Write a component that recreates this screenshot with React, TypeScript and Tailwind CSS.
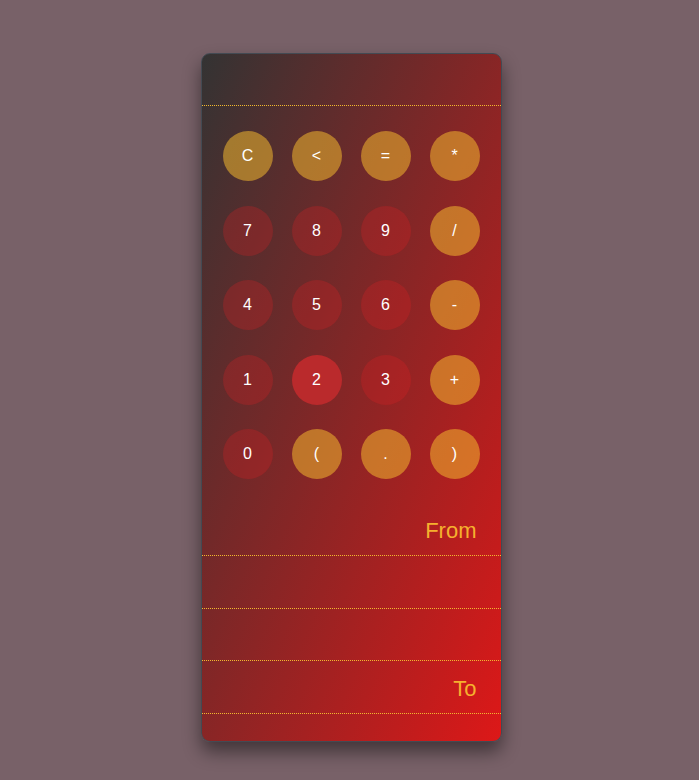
const rows = [
  [
    { label: "C", kind: "op" },
    { label: "<", kind: "op" },
    { label: "=", kind: "op" },
    { label: "*", kind: "op" },
  ],
  [
    { label: "7", kind: "num" },
    { label: "8", kind: "num" },
    { label: "9", kind: "num" },
    { label: "/", kind: "op" },
  ],
  [
    { label: "4", kind: "num" },
    { label: "5", kind: "num" },
    { label: "6", kind: "num" },
    { label: "-", kind: "op" },
  ],
  [
    { label: "1", kind: "num" },
    { label: "2", kind: "active" },
    { label: "3", kind: "num" },
    { label: "+", kind: "op" },
  ],
  [
    { label: "0", kind: "num" },
    { label: "(", kind: "op" },
    { label: ".", kind: "op" },
    { label: ")", kind: "op" },
  ],
];

export default function App() {
  return (
    <div className="min-h-[780px] bg-[#786168] pt-[53px] pl-[3px] flex justify-center font-['Liberation_Sans',Arial,sans-serif]">
      <div className="w-[301px] h-[689px] rounded-[9px] border border-[#434a53] bg-[linear-gradient(to_bottom_right,#333333,#dd1818)] shadow-[0_10px_18px_rgba(0,0,0,0.45)] overflow-hidden flex flex-col">
        {/* display */}
        <div className="h-[52px] border-b border-dotted border-[#f3b92f]"></div>

        {/* keypad */}
        <div className="flex flex-col gap-y-[24.5px] px-[21px] pt-[25px]">
          {rows.map((row, i) => (
            <div key={i} className="flex justify-between">
              {row.map((key) => (
                <button
                  key={key.label}
                  className={
                    "w-[50px] h-[50px] rounded-full text-white text-[16px] flex items-center justify-center " +
                    (key.kind === "op"
                      ? "bg-[rgba(243,185,47,0.54)]"
                      : key.kind === "active"
                        ? "bg-[#ba2a2c]"
                        : "bg-[rgba(230,30,35,0.25)]")
                  }
                >
                  {key.label}
                </button>
              ))}
            </div>
          ))}
        </div>

        {/* from / to */}
        <div className="mt-[24px]">
          <div className="h-[53px] border-b border-dotted border-[#f3b92f] flex items-center justify-end pr-[24px] pt-[2px] text-[22px] text-[#f5b02e]">
            From
          </div>
          <div className="h-[53px] border-b border-dotted border-[#f3b92f]"></div>
          <div className="h-[52px] border-b border-dotted border-[#f3b92f]"></div>
          <div className="h-[53px] border-b border-dotted border-[#f3b92f] flex items-center justify-end pr-[24px] pt-[2px] text-[22px] text-[#f5b02e]">
            To
          </div>
        </div>
      </div>
    </div>
  );
}
